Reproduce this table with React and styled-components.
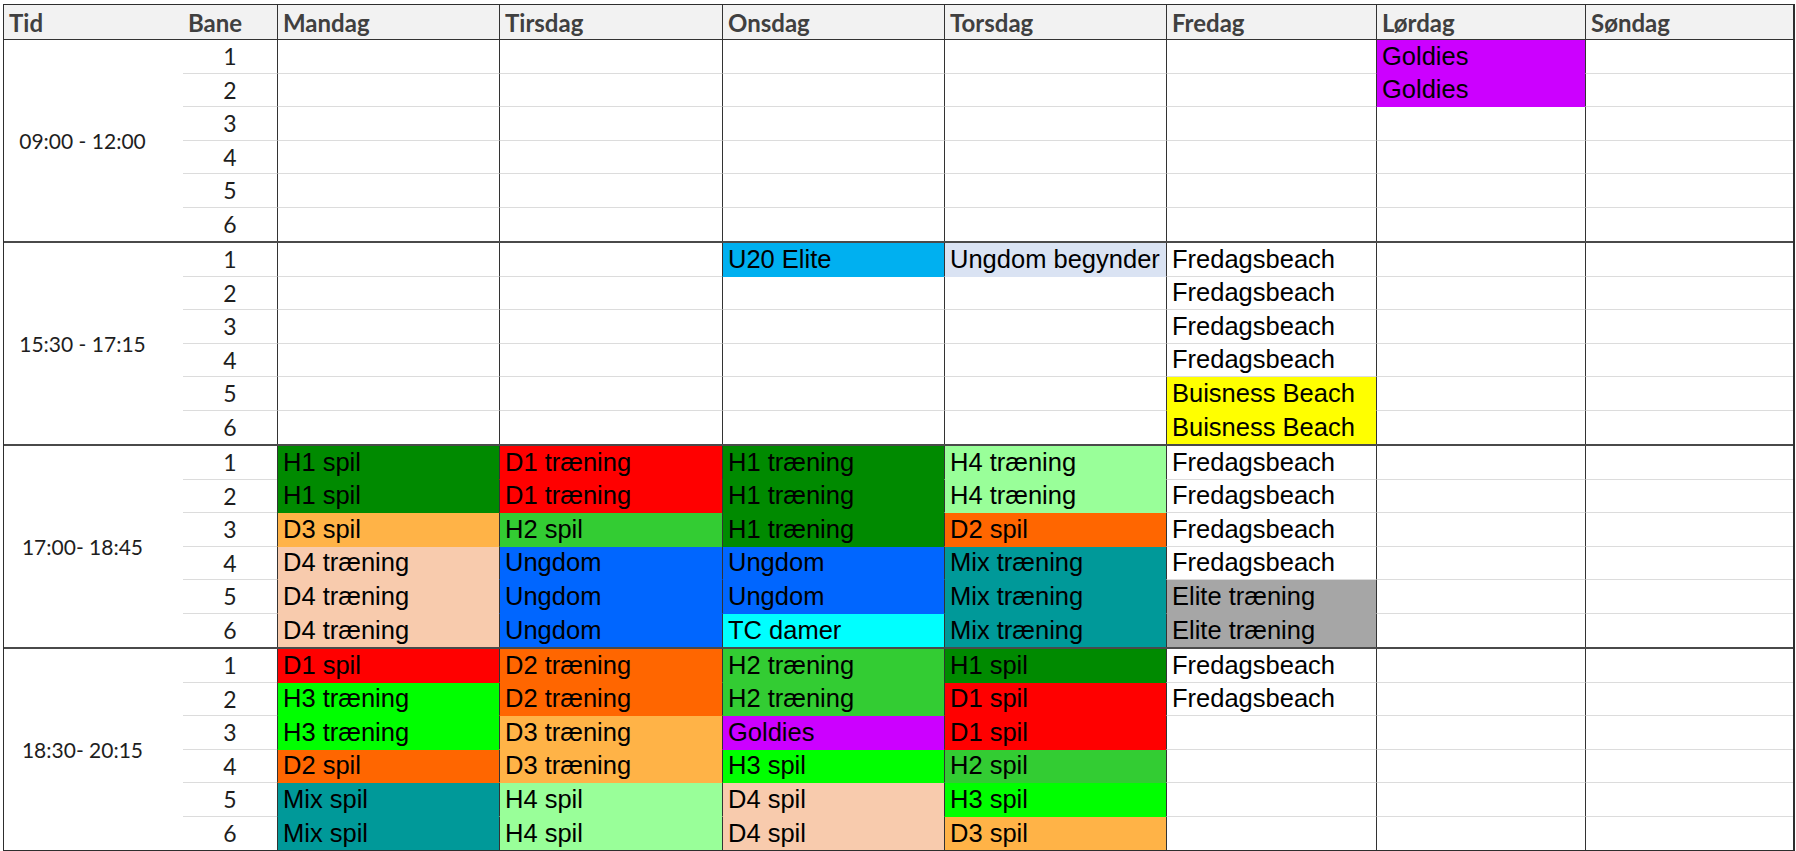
import React from 'react';
import styled, { createGlobalStyle } from 'styled-components';

const GlobalStyle = createGlobalStyle`
  html, body {
    margin: 0;
    padding: 0;
    background: #ffffff;
  }
  body {
    font-family: "Liberation Sans", Arial, sans-serif;
  }
`;

const COLS = '179px 94px 222px 223px 222px 222px 210px 209px 208px';

const Page = styled.div`
  padding: 4px 0 0 3px;
`;

const Sheet = styled.div`
  width: max-content;
  border: 1px solid #2e2e2e;
  border-right-width: 2px;
  border-bottom-width: 2px;
`;

const HeaderRow = styled.div`
  display: grid;
  grid-template-columns: ${COLS};
  height: 35px;
  background: #f2f2f2;
  border-bottom: 1px solid #333;
  box-sizing: border-box;
`;

const HeadCell = styled.div`
  display: flex;
  align-items: center;
  padding-left: 5px;
  font-family: Lato, "Open Sans", sans-serif;
  font-weight: 700;
  font-size: 24px;
  color: #404040;
  border-left: ${p => (p.$line ? '1px solid #333' : 'none')};
  box-sizing: border-box;
`;

const Group = styled.div`
  display: grid;
  grid-template-columns: ${COLS};
  grid-template-rows: repeat(6, 33.5px);
  border-top: ${p => (p.$first ? 'none' : '2px solid #4a4a4a')};
`;

const TimeCell = styled.div`
  grid-row: 1 / span 6;
  display: flex;
  align-items: center;
  justify-content: center;
  padding-right: 22px;
  font-family: Lato, "Open Sans", sans-serif;
  font-size: 21px;
  color: #1e1e1e;
`;

const LaneCell = styled.div`
  display: flex;
  align-items: center;
  justify-content: center;
  font-family: Lato, "Open Sans", sans-serif;
  font-size: 23px;
  color: #1e1e1e;
  border-bottom: ${p => (p.$last ? 'none' : '1px solid #dcdcdc')};
  box-sizing: border-box;
`;

const DayCell = styled.div`
  display: flex;
  align-items: flex-end;
  padding: 0 0 1px 5px;
  background: ${p => p.$bg || '#ffffff'};
  border-left: 1px solid #333;
  border-bottom: ${p => (p.$last ? 'none' : `1px solid ${p.$bg || '#dcdcdc'}`)};
  box-sizing: border-box;
  font-size: 25.5px;
  line-height: 31px;
  color: #000;
  white-space: nowrap;
  overflow: hidden;
`;

const C = {
  goldies: '#cc00ff',
  u20: '#00b0f0',
  ubeg: '#dae3f3',
  yellow: '#ffff00',
  h1: '#008a00',
  d1: '#ff0000',
  h4: '#99ff99',
  d3: '#ffb347',
  h2: '#33cc33',
  d2: '#ff6600',
  d4: '#f8cbad',
  ung: '#0066ff',
  tc: '#00ffff',
  mix: '#009999',
  elite: '#a6a6a6',
  h3: '#00ff00',
};

const c = (text, color) => ({ text, color });
const rep = (n, cell) => Array.from({ length: n }, () => cell);
const empty = rep(6, null);

const days = ['Mandag', 'Tirsdag', 'Onsdag', 'Torsdag', 'Fredag', 'Lørdag', 'Søndag'];

const groups = [
  {
    time: '09:00 - 12:00',
    cols: [
      empty, empty, empty, empty, empty,
      [...rep(2, c('Goldies', C.goldies)), ...rep(4, null)],
      empty,
    ],
  },
  {
    time: '15:30 - 17:15',
    cols: [
      empty,
      empty,
      [c('U20 Elite', C.u20), ...rep(5, null)],
      [c('Ungdom begynder', C.ubeg), ...rep(5, null)],
      [...rep(4, c('Fredagsbeach')), ...rep(2, c('Buisness Beach', C.yellow))],
      empty,
      empty,
    ],
  },
  {
    time: '17:00- 18:45',
    cols: [
      [c('H1 spil', C.h1), c('H1 spil', C.h1), c('D3 spil', C.d3), ...rep(3, c('D4 træning', C.d4))],
      [...rep(2, c('D1 træning', C.d1)), c('H2 spil', C.h2), ...rep(3, c('Ungdom', C.ung))],
      [...rep(3, c('H1 træning', C.h1)), ...rep(2, c('Ungdom', C.ung)), c('TC damer', C.tc)],
      [...rep(2, c('H4 træning', C.h4)), c('D2 spil', C.d2), ...rep(3, c('Mix træning', C.mix))],
      [...rep(4, c('Fredagsbeach')), ...rep(2, c('Elite træning', C.elite))],
      empty,
      empty,
    ],
  },
  {
    time: '18:30- 20:15',
    cols: [
      [c('D1 spil', C.d1), ...rep(2, c('H3 træning', C.h3)), c('D2 spil', C.d2), ...rep(2, c('Mix spil', C.mix))],
      [...rep(2, c('D2 træning', C.d2)), ...rep(2, c('D3 træning', C.d3)), ...rep(2, c('H4 spil', C.h4))],
      [...rep(2, c('H2 træning', C.h2)), c('Goldies', C.goldies), c('H3 spil', C.h3), ...rep(2, c('D4 spil', C.d4))],
      [c('H1 spil', C.h1), ...rep(2, c('D1 spil', C.d1)), c('H2 spil', C.h2), c('H3 spil', C.h3), c('D3 spil', C.d3)],
      [...rep(2, c('Fredagsbeach')), ...rep(4, null)],
      empty,
      empty,
    ],
  },
];

const lanes = [0, 1, 2, 3, 4, 5];

export default function App() {
  return (
    <Page>
      <GlobalStyle />
      <Sheet>
        <HeaderRow>
          <HeadCell>Tid</HeadCell>
          <HeadCell>Bane</HeadCell>
          {days.map(d => (
            <HeadCell key={d} $line>{d}</HeadCell>
          ))}
        </HeaderRow>
        {groups.map((g, gi) => (
          <Group key={g.time} $first={gi === 0}>
            <TimeCell>{g.time}</TimeCell>
            {lanes.map(i => (
              <React.Fragment key={i}>
                <LaneCell $last={i === 5}>{i + 1}</LaneCell>
                {g.cols.map((col, di) => {
                  const cell = col[i];
                  return (
                    <DayCell key={di} $bg={cell && cell.color} $last={i === 5}>
                      {cell ? cell.text : ''}
                    </DayCell>
                  );
                })}
              </React.Fragment>
            ))}
          </Group>
        ))}
      </Sheet>
    </Page>
  );
}
